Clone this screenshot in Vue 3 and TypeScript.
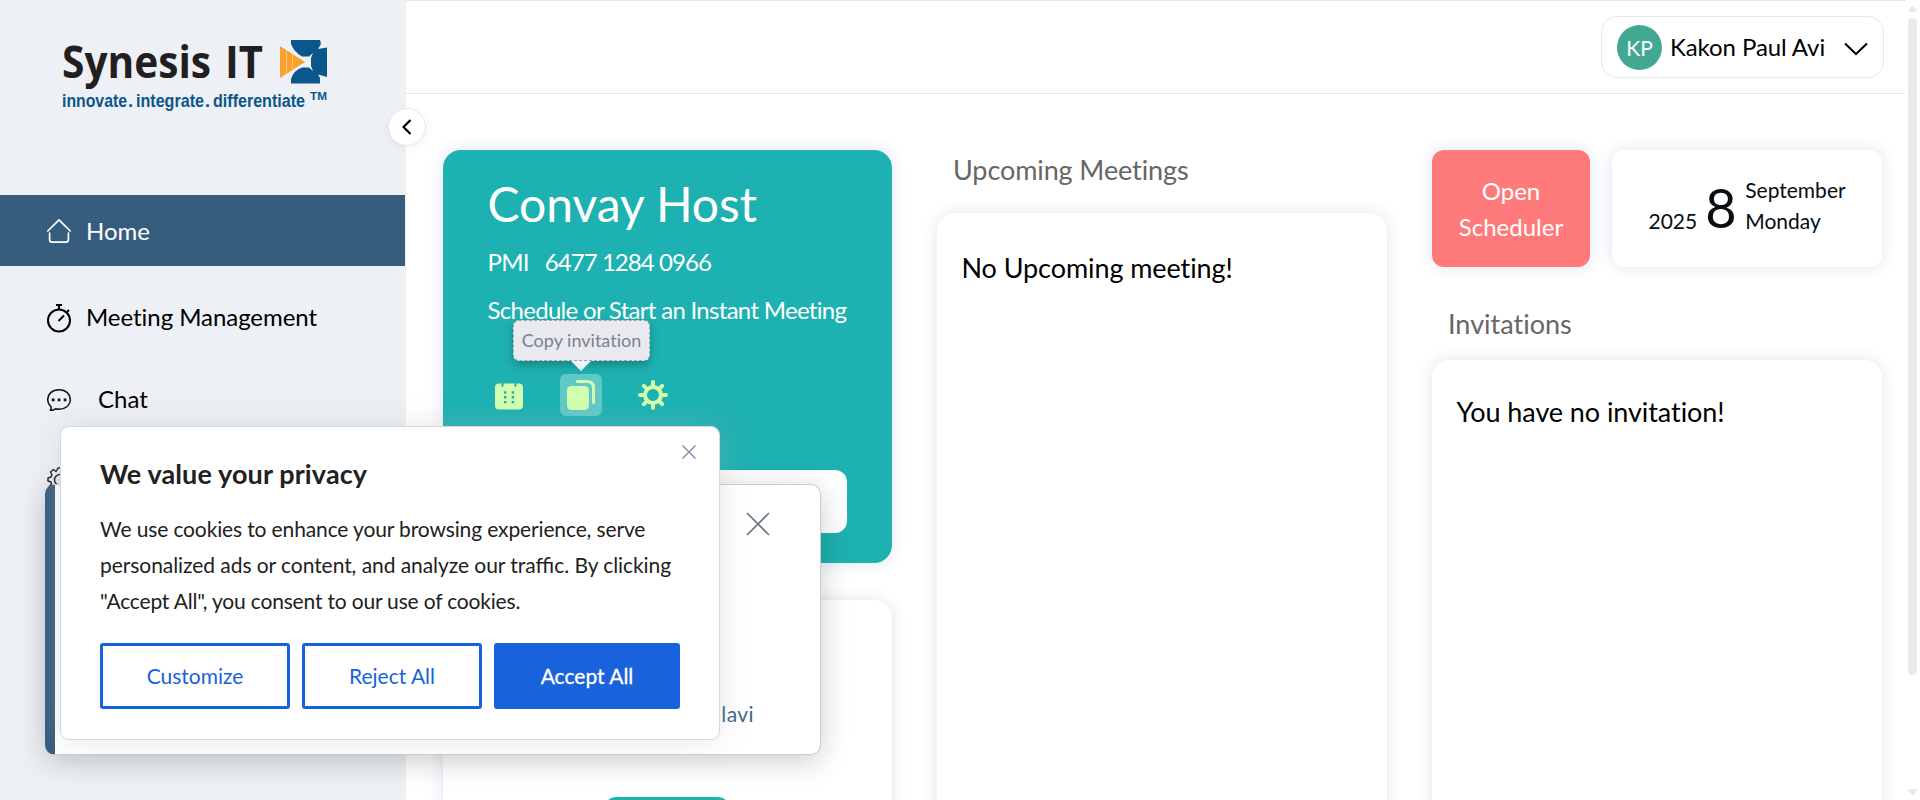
<script setup lang="ts">
interface NavItem {
  id: string
  label?: string
}

const navItems: NavItem[] = [
  { id: 'home', label: 'Home' },
  { id: 'meetings', label: 'Meeting Management' },
  { id: 'chat', label: 'Chat' },
  { id: 'settings' },
]

const cogTeeth: number[] = [0, 45, 90, 135, 180, 225, 270, 315]
</script>

<template>
  <div class="app">
    <aside class="sidebar">
      <div class="logo">
        <div class="logo-top">
          <svg class="logo-name" width="202" height="42" viewBox="0 0 202 42">
            <text x="0" y="37.500" textLength="149" lengthAdjust="spacingAndGlyphs">Synesis</text>
            <text x="163" y="37.500" textLength="38" lengthAdjust="spacingAndGlyphs">IT</text>
          </svg>
          <svg class="logo-mark" width="48" height="44" viewBox="0 0 48 44">
            <path fill="#0b568a" d="M11 0H40L41 4L38 9L47 7.500V37L38 34.500L40 38V43.500H11V39Q14 30 22 27.500H29L33 31L31 26V18L33 13L29 16.500H22Q14 12 11 4Z" />
            <path fill="#f8a12c" d="M0 6L25 22L0 38Z" />
            <path stroke="#f9c57e" stroke-width="1" d="M6.500 10.500V33.500M12.500 14.500V29.500" />
          </svg>
        </div>
        <svg class="logo-tag" width="266" height="20" viewBox="0 0 266 20">
          <text x="0" y="15.500" textLength="65" lengthAdjust="spacingAndGlyphs">innovate</text>
          <text x="66" y="15.500">.</text>
          <text x="74" y="15.500" textLength="68" lengthAdjust="spacingAndGlyphs">integrate</text>
          <text x="143" y="15.500">.</text>
          <text x="151" y="15.500" textLength="92" lengthAdjust="spacingAndGlyphs">differentiate</text>
          <text class="tm" x="248" y="9" textLength="17" lengthAdjust="spacingAndGlyphs">TM</text>
        </svg>
      </div>

      <nav class="nav">
        <div v-for="item in navItems" :key="item.id" class="nav-item" :class="item.id">
          <svg v-if="item.id === 'home'" class="nav-icon" width="24" height="24" viewBox="0 0 24 24" fill="none" stroke="#fff" stroke-width="1.700" stroke-linecap="round" stroke-linejoin="round">
            <path d="M.8 12L12 .8L23.200 12M2.600 14V20.500Q2.600 23.200 5.500 23.200H18.500Q21.400 23.200 21.400 20.500V14" />
          </svg>
          <svg v-else-if="item.id === 'meetings'" class="nav-icon" width="24" height="29" viewBox="0 0 24 29" fill="none" stroke="#000" stroke-width="2">
            <circle cx="12" cy="16.500" r="11" />
            <path d="M9 1H15M12 1V5M20 8L22 6M11.500 17L17 11.500" />
          </svg>
          <svg v-else-if="item.id === 'chat'" class="nav-icon" width="24" height="22" viewBox="0 0 24 22" fill="none" stroke="#111" stroke-width="1.500" stroke-linejoin="round">
            <path d="M3.300 21.300Q5 19 3.500 17Q.7 14.500 .7 10.800C.7 5 5 .8 12 .8S23.300 5 23.300 10.800S18 20.300 12 20.300Q10 20.300 8.500 19.800Q6 21.600 3.300 21.300Z" />
            <path stroke="none" fill="#111" d="M4.800 9.500h2.700v2.700H4.800zM10.700 9.500h2.700v2.700h-2.700zM16.700 9.500h2.700v2.700h-2.700z" />
          </svg>
          <svg v-else class="nav-icon" width="26" height="26" viewBox="-13 -13 26 26" fill="none" stroke="#222" stroke-width="1.500" stroke-linejoin="round">
            <path d="M-2-12H2L3-9L5.500-8L8.500-9.500L10.500-6.500L8.500-4L9-2L12-1V2L9 3L8 5.500L9.500 8.500L6.500 10.500L4 8.500L2 12H-2L-3 9L-5.500 8L-8.500 9.500L-10.500 6.500L-8.500 4L-9 2L-12 1V-2L-9-3L-8-5L-9.500-8L-6.500-10.500L-4-8.500Z" />
            <circle r="5.500" />
          </svg>
          <span v-if="item.label">{{ item.label }}</span>
        </div>
      </nav>
      <button class="collapse" aria-label="Collapse sidebar">
        <svg width="10" height="16" viewBox="0 0 10 16" fill="none" stroke="#000" stroke-width="2.200"><path d="M8.500 1L1.500 8L8.500 15" /></svg>
      </button>
    </aside>

    <div class="page">
      <header class="topbar">
        <div class="user">
          <span class="avatar">KP</span>
          <span class="user-name">Kakon Paul Avi</span>
          <svg width="24" height="14" viewBox="0 0 24 14" fill="none" stroke="#000" stroke-width="2"><path d="M1 1.500L12 12L23 1.500" /></svg>
        </div>
      </header>

      <main class="columns">
        <section class="col col-host">
          <div class="card host">
            <h1>Convay Host</h1>
            <p class="pmi"><span>PMI</span><span class="pmi-number">6477 1284 0966</span></p>
            <p class="hint">Schedule or Start an Instant Meeting</p>
            <div class="actions">
              <svg width="28" height="27" viewBox="0 0 28 27">
                <path fill="#d1ffae" d="M4 .5H6.500V3Q7.500 5 8.500 3V.5H19.500V3Q20.500 5 21.500 3V.5H24Q28 .5 28 4.500V22.500Q28 26.500 24 26.500H4Q0 26.500 0 22.500V4.500Q0 .5 4 .5Z" />
                <path stroke="#1eb1b1" stroke-width="2.400" stroke-dasharray="2.400 2.400" d="M10.200 8.300V20.500M17.900 8.300V20.500" />
              </svg>
              <div class="copy">
                <div class="tooltip">Copy invitation</div>
                <svg width="28" height="30" viewBox="0 0 28 30">
                  <rect y="6" width="22" height="24" rx="4.500" fill="#d1ffae" />
                  <path d="M10.500 1.500H20Q26.500 1.500 26.500 8V22.500" fill="none" stroke="#d1ffae" stroke-width="3" stroke-linecap="round" />
                </svg>
              </div>
              <svg class="cog" width="30" height="30" viewBox="-15 -15 30 30" stroke="#d1ffae" fill="none">
                <circle r="8" stroke-width="4" />
                <path v-for="a in cogTeeth" :key="a" :transform="`rotate(${a})`" d="M0-9V-13" stroke-width="4" stroke-linecap="round" />
              </svg>
            </div>
            <div class="start"></div>
          </div>
          <div class="card schedule"><div class="schedule-btn"></div></div>
        </section>

        <section class="col">
          <h2 class="upcoming-title">Upcoming Meetings</h2>
          <div class="card list upcoming">No Upcoming meeting!</div>
        </section>

        <section class="col">
          <div class="tiles">
            <button class="scheduler">Open<br />Scheduler</button>
            <div class="date">
              <span class="year">2025</span>
              <span class="day">8</span>
              <span class="month">September<br />Monday</span>
            </div>
          </div>
          <h2 class="inv-title">Invitations</h2>
          <div class="card list invites">You have no invitation!</div>
        </section>
      </main>
    </div>

    <div class="scrollbar">
      <svg width="9" height="7" viewBox="0 0 9 7" fill="#eaeaea"><path d="M0 7V5.500L4.500 0L9 5.500V7Z" /></svg>
      <div class="thumb"></div>
      <svg class="down" width="9" height="7" viewBox="0 0 9 7" fill="#eaeaea"><path d="M0 0V1.500L4.500 7L9 1.500V0Z" /></svg>
    </div>

    <div class="notice">
      <svg class="notice-close" width="24" height="24" viewBox="0 0 24 24" stroke="#6b7487" stroke-width="1.700"><path d="M1 1L23 23M23 1L1 23" /></svg>
      <span class="notice-name">lavi</span>
    </div>

    <div class="consent">
      <svg class="consent-close" width="14" height="14" viewBox="0 0 14 14" stroke="#8691a9" stroke-width="1.500"><path d="M.5 .5L13.500 13.500M13.500 .5L.5 13.500" /></svg>
      <h3>We value your privacy</h3>
      <p>
        <span class="line l1">We use cookies to enhance your browsing experience, serve</span>
        <span class="line l2">personalized ads or content, and analyze our tra<span class="lig">ffi</span>c. By clicking</span>
        <span class="line l3">"Accept All", you consent to our use of cookies.</span>
      </p>
      <div class="buttons">
        <button class="b1">Customize</button>
        <button class="b2">Reject All</button>
        <button class="b3">Accept All</button>
      </div>
    </div>
  </div>
</template>

<style>
body {
  margin: 0;
  overflow: hidden;
}
</style>

<style scoped>
.app,
.app * {
  box-sizing: border-box;
}
.app {
  position: relative;
  display: flex;
  width: 1920px;
  height: 800px;
  overflow: hidden;
  background: #fff;
  color: #000;
  font: 400 24px/36px Lato, "Liberation Sans", sans-serif;
  font-variant-ligatures: none;
}
h1, h2, h3, p {
  margin: 0;
  font-weight: 400;
}
button {
  font: inherit;
  padding: 0;
  white-space: nowrap;
}
svg {
  display: block;
  flex: none;
}

/* Sidebar */
.sidebar {
  position: relative;
  width: 406px;
  flex: none;
  background: #edf1f5;
}
.logo {
  height: 195px;
  padding: 40px 0 0 62px;
}
.logo-top {
  display: flex;
  gap: 16px;
  height: 51px;
}
.logo-name {
  overflow: visible;
  font: 700 44px "Open Sans", sans-serif;
  fill: #231f20;
}
.logo-tag {
  overflow: visible;
  font: 700 18.5px "Liberation Sans", sans-serif;
  fill: #0b568a;
}
.logo-tag .tm {
  font-size: 10px;
}
.nav-item {
  display: flex;
  align-items: center;
  height: 71px;
  padding-left: 47px;
}
.nav-item span {
  margin-left: 15px;
}
.home {
  width: 405px;
  margin-bottom: 16px;
  background: #375d7e;
  color: #fff;
}
.meetings {
  margin-bottom: 11px;
  letter-spacing: -0.05px;
}
.meetings svg {
  margin-top: 2px;
}
.meetings span,
.chat span {
  margin-bottom: 2px;
}
.chat {
  margin-bottom: 9px;
}
.nav-item.chat span {
  margin-left: 27px;
}
.collapse {
  position: absolute;
  left: 388px;
  top: 108px;
  z-index: 2;
  display: flex;
  align-items: center;
  justify-content: center;
  width: 38px;
  height: 38px;
  border: 1px solid #e3e7ec;
  border-radius: 50%;
  background: #fff;
  box-shadow: 0 2px 12px rgba(0, 0, 0, 0.05);
}

/* Header */
.page {
  width: 1499px;
}
.topbar {
  display: flex;
  justify-content: flex-end;
  height: 94px;
  padding: 15px 21px 0 0;
  border-top: 1px solid #e6e6e6;
  border-bottom: 1px solid #e6e6e6;
}
.user {
  display: flex;
  align-items: center;
  width: 283px;
  height: 62px;
  padding-left: 15px;
  border: 1px solid #eaeaea;
  border-radius: 16px;
}
.avatar {
  width: 45px;
  height: 45px;
  border-radius: 50%;
  background: #43a893;
  color: #fff;
  font-size: 21px;
  line-height: 45px;
  text-align: center;
}
.user-name {
  width: 174px;
  margin-left: 8px;
  letter-spacing: -0.08px;
  white-space: nowrap;
}
.user svg {
  margin-top: 4px;
}

/* Columns */
.columns {
  display: flex;
  gap: 45px;
  padding: 56px 0 0 37px;
}
.col {
  width: 450px;
  flex: none;
}
.col-host {
  width: 449px;
}
.card {
  border-radius: 18px;
  background: #fff;
  box-shadow: 0 0 15px rgba(55, 90, 170, 0.16);
}
.host {
  height: 413px;
  padding: 26px 45px 0 44.5px;
  background: #1eb1b1;
  color: #fff;
  white-space: nowrap;
}
.host h1 {
  font-size: 48px;
  line-height: 56px;
}
.pmi {
  display: flex;
  gap: 16px;
  margin-top: 12px;
  letter-spacing: -0.7px;
}
.pmi-number {
  letter-spacing: -0.95px;
}
.hint {
  margin-top: 12px;
  letter-spacing: -0.7px;
}
.actions {
  display: flex;
  align-items: center;
  margin: 46px 0 0 7.5px;
  height: 42px;
}
.actions > svg:first-child {
  margin-top: 3px;
}
.copy {
  position: relative;
  display: flex;
  align-items: center;
  justify-content: center;
  width: 42px;
  height: 42px;
  margin: 0 36px 0 37px;
  border-radius: 6px;
  background: rgba(255, 255, 255, 0.3);
}
.tooltip {
  position: absolute;
  left: -47px;
  bottom: 55px;
  width: 137px;
  height: 41px;
  border: 1px dashed #9da1b0;
  border-radius: 6px;
  background: #e9eaef;
  color: #7b8092;
  box-shadow: 0 4px 10px rgba(0, 0, 0, 0.25);
  font-size: 18px;
  line-height: 38px;
  text-align: center;
}
.tooltip::after {
  content: "";
  position: absolute;
  left: 57px;
  top: 40px;
  border: 10px solid transparent;
  border-top-color: #f0f0f5;
  border-bottom: 0;
}
.start {
  height: 63px;
  margin-top: 54px;
  border-radius: 12px;
  background: #fff;
}
.schedule {
  height: 300px;
  margin-top: 37px;
  padding-top: 197px;
}
.schedule-btn {
  width: 126px;
  height: 50px;
  margin-left: 161px;
  border-radius: 12px;
  background: #1eb1b1;
}
h2 {
  padding-left: 16px;
  color: #666;
  font-size: 27px;
  line-height: 40px;
}
.list {
  height: 700px;
  padding: 35px 24.5px;
  font-size: 27px;
  line-height: 40px;
}
.upcoming-title {
  margin-bottom: 23px;
  letter-spacing: -0.1px;
}
.upcoming,
.invites {
  letter-spacing: -0.08px;
}
.tiles {
  display: flex;
  justify-content: space-between;
  height: 117px;
}
.scheduler,
.date {
  border: 0;
  border-radius: 12px;
  box-shadow: 0 0 15px rgba(55, 90, 170, 0.16);
}
.scheduler {
  width: 158px;
  background: #ff7b7b;
  color: #fff;
}
.date {
  display: flex;
  width: 270px;
  padding-left: 36.5px;
  background: #fff;
  color: #060d13;
  font-size: 21px;
  line-height: 31px;
}
.year {
  margin-top: 55px;
}
.day {
  width: 31px;
  margin: 28px 9px 0 8px;
  font-size: 54px;
  line-height: 60px;
}
.month {
  margin-top: 24px;
}
.inv-title {
  margin: 37px 0 16px;
}
.invites {
  padding-top: 32px;
}

/* Scrollbar */
.scrollbar {
  width: 15px;
  height: 800px;
  padding: 5px 0 0 3px;
}
.thumb {
  width: 9px;
  height: 657px;
  margin: 6px 0 114px;
  border-radius: 5px;
  background: #eaeaea;
}

/* Overlays */
.notice {
  position: absolute;
  left: 45px;
  top: 484px;
  display: flex;
  flex-direction: column;
  align-items: flex-end;
  justify-content: space-between;
  width: 776px;
  height: 271px;
  padding: 27px 50px 22px 0;
  border: 1px solid #ccc;
  border-left: 10px solid #375d7e;
  border-radius: 10px;
  background: #fff;
  box-shadow: 0 6px 30px rgba(0, 0, 0, 0.2);
}
.notice-name {
  margin-right: 16px;
  color: #41658a;
  font-size: 21px;
  letter-spacing: 0.4px;
}
.consent {
  position: absolute;
  left: 60px;
  top: 426px;
  width: 660px;
  height: 314px;
  padding: 30px 39px;
  border: 1px solid #d3d7e0;
  border-radius: 9px;
  background: #fff;
  box-shadow: 0 0 30px rgba(172, 171, 171, 0.3);
  color: #212121;
  white-space: nowrap;
}
.consent-close {
  position: absolute;
  right: 23px;
  top: 18px;
}
.consent h3 {
  font-size: 27px;
  font-weight: 700;
  line-height: 34px;
  letter-spacing: 0.12px;
}
.consent p {
  margin-top: 20px;
  font-size: 21px;
  line-height: 36px;
}
.line {
  display: block;
}
.l1 {
  letter-spacing: -0.13px;
}
.l2 {
  letter-spacing: -0.06px;
}
.l3 {
  letter-spacing: -0.18px;
}
.lig {
  letter-spacing: 0;
  font-variant-ligatures: normal;
}
.buttons {
  display: flex;
  gap: 12px;
  margin-top: 24px;
}
.buttons button {
  height: 66px;
  border: 3px solid #1863dc;
  border-radius: 3px;
  background: #fff;
  color: #1863dc;
  font-size: 21px;
}
.buttons .b1 {
  width: 190px;
}
.buttons .b2 {
  width: 180px;
}
.buttons .b3 {
  width: 186px;
  background: #1863dc;
  color: #fff;
  -webkit-text-stroke: 0.3px #fff;
}
</style>
